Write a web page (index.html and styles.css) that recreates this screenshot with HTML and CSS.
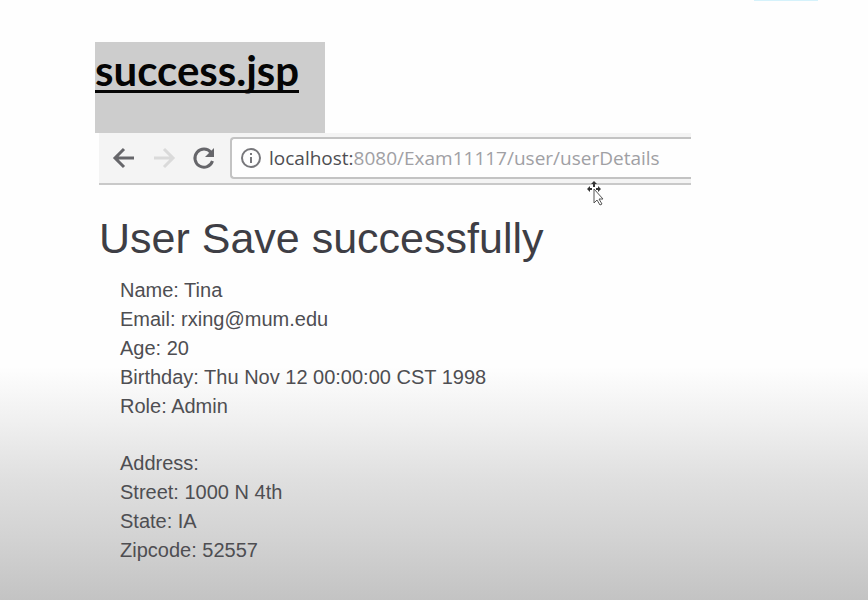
FILE: index.html
```html
<!DOCTYPE html>
<html lang="en">
<head>
<meta charset="utf-8">
<title>success.jsp</title>
<link rel="stylesheet" href="styles.css">
</head>
<body>
<main class="slide">
  <div class="accent"></div>
  <h1 class="caption"><span class="caption-text">success.jsp</span></h1>
  <section class="browser">
    <form class="toolbar">
      <div class="nav">
        <button class="nav-button" type="button" aria-label="Back">
          <svg viewBox="0 0 24 24" width="24" height="24"><path d="M22 12H3M12 3l-9 9 9 9"/></svg>
        </button>
        <button class="nav-button disabled" type="button" aria-label="Forward" disabled>
          <svg viewBox="0 0 24 24" width="24" height="24"><path d="M2 12h19M12 3l9 9-9 9"/></svg>
        </button>
        <button class="nav-button" type="button" aria-label="Reload">
          <svg viewBox="0 0 24 24" width="24" height="24"><path d="M19 6.500A9 9 0 1 0 20.500 15"/><path class="solid" d="M22 2v9h-9z"/></svg>
        </button>
      </div>
      <div class="address">
        <svg class="info" viewBox="0 0 22 22" width="22" height="22"><circle cx="11" cy="11" r="9"/><path d="M11 10v6M11 6v2"/></svg>
        <label class="host" for="path">localhost:</label>
        <input class="path" id="path" type="text" value="8080/Exam11117/user/userDetails">
      </div>
      <svg class="pointer" viewBox="0 0 20 28" width="20" height="28">
        <path class="move" d="M8 1l3 3H9v3H7V4H5zM1 9l3-3v2h2v2H4v2zM15 9l-3-3v2h-2v2h2v2z"/>
        <path class="arrow" d="M8 9v14l3-3 3 5 2-1-3-5h4z"/>
      </svg>
    </form>
    <h2 class="heading">User Save successfully</h2>
    <div class="details">
      <p>Name: Tina</p>
      <p>Email: rxing@mum.edu</p>
      <p>Age: 20</p>
      <p>Birthday: Thu Nov 12 00:00:00 CST 1998</p>
      <p>Role: Admin</p>
    </div>
    <div class="details">
      <p>Address:</p>
      <p>Street: 1000 N 4th</p>
      <p>State: IA</p>
      <p>Zipcode: 52557</p>
    </div>
  </section>
</main>
</body>
</html>
```
FILE: styles.css
```css
* { box-sizing: border-box; }

body { margin: 0; }

h1, h2, p { margin: 0; font-weight: normal; }

.slide {
  position: relative;
  min-height: 100vh;
  padding: 42px 177px 36px 95px;
  background: linear-gradient(#fefefe 0%, #fefefe 61%, #f0f0f0 70%, #dfdfdf 80%, #d2d2d2 90%, #c3c3c3 100%);
  font-family: "Liberation Sans", Arial, sans-serif;
  color: #4e4e52;
}

.accent {
  position: absolute;
  top: 0;
  right: 50px;
  width: 64px;
  height: 1px;
  background: #d5f2fb;
}

.caption {
  width: 230px;
  height: 91px;
  background: #cdcdcd;
  color: #050505;
  font: bold 42px/56px Lato, Carlito, sans-serif;
}

.caption-text {
  display: inline-block;
  height: 51px;
  border-bottom: 3px solid #050505;
}

.browser { padding-left: 4px; }

.toolbar {
  position: relative;
  display: flex;
  align-items: center;
  height: 52px;
  border-bottom: 2px solid #c9c9c9;
  background: #f4f4f4;
}

.nav {
  display: flex;
  gap: 16px;
  padding: 0 14px 0 13px;
}

.nav-button {
  display: flex;
  width: 24px;
  height: 24px;
  padding: 0;
  border: 0;
  background: none;
  color: #66666a;
}

.nav-button.disabled { color: #dadada; }

.nav-button svg, .info {
  flex: none;
  fill: none;
  stroke: currentColor;
  stroke-width: 3;
}

.nav-button .solid { fill: currentColor; stroke: none; }

.address {
  flex: 1;
  display: flex;
  align-items: center;
  height: 42px;
  min-width: 0;
  padding-left: 8px;
  border: 2px solid #c3c3c3;
  border-right: 0;
  border-radius: 4px 0 0 4px;
  background: #fefefe;
  color: #77777b;
  font: 19px/24px "Open Sans", "Noto Sans", sans-serif;
}

.info { stroke-width: 2; }

.host { padding-left: 7px; color: #4e4e52; }

.path {
  flex: 1;
  min-width: 0;
  padding: 0;
  border: 0;
  outline: 0;
  background: none;
  color: #a0a0a4;
  font: inherit;
}

.pointer {
  position: absolute;
  top: 47px;
  right: 85px;
}

.move { fill: #333; }

.arrow { fill: #fefefe; stroke: #555; }

.heading {
  padding: 28px 0 13px;
  color: #3e3e45;
  font-size: 43px;
  line-height: 50px;
  white-space: nowrap;
}

.details {
  padding: 0 0 28px 21px;
  font-size: 20px;
  line-height: 29px;
}

.details:last-child { padding-bottom: 0; }
```
